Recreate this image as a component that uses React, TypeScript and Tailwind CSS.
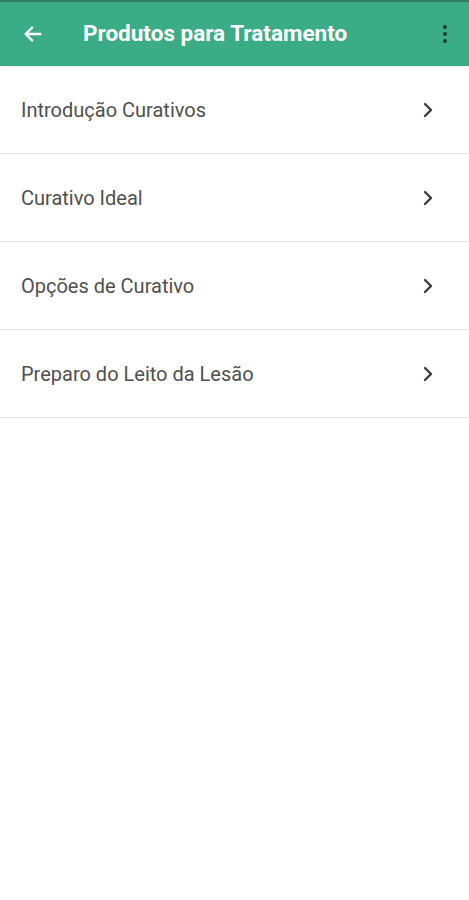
const items = [
    "Introdução Curativos",
    "Curativo Ideal",
    "Opções de Curativo",
    "Preparo do Leito da Lesão",
];

function ArrowLeft() {
    return (
        <svg width="22" height="22" viewBox="0 0 24 24" fill="none" stroke="white" strokeWidth="2.6" strokeLinecap="round" strokeLinejoin="round">
            <path d="M20 12H5" />
            <path d="M11 5l-7 7 7 7" />
        </svg>
    );
}

function Chevron() {
    return (
        <svg width="16" height="18" viewBox="0 0 16 18" fill="none" stroke="#3d3d3d" strokeWidth="2.4" strokeLinecap="round" strokeLinejoin="round">
            <path d="M5 3l6 6-6 6" />
        </svg>
    );
}

export default function App() {
    return (
        <div className="w-[469px] h-[900px] bg-white font-['Roboto',sans-serif]">
            <div className="h-[2px] bg-[#2e7f62]"></div>
            <div className="h-[64px] bg-[#3aac86] flex items-center pl-[22px] pr-[22px] shadow-[0_1px_2px_rgba(0,0,0,0.08)]">
                <ArrowLeft />
                <div className="ml-[39px] flex-1 text-white text-[22.5px] font-bold">Produtos para Tratamento</div>
                <div className="flex flex-col items-center gap-[2.5px]">
                    <span className="w-[4.5px] h-[4.5px] rounded-full bg-[#1d3b30]"></span>
                    <span className="w-[4.5px] h-[4.5px] rounded-full bg-[#1d3b30]"></span>
                    <span className="w-[4.5px] h-[4.5px] rounded-full bg-[#1d3b30]"></span>
                </div>
            </div>
            <div className="flex flex-col">
                {items.map((item) => (
                    <div key={item} className="h-[88px] flex items-center justify-between pl-[21px] pr-[33px] border-b-[1.5px] border-[#e4e4e4]">
                        <span className="text-[20px] text-[#505050]">{item}</span>
                        <Chevron />
                    </div>
                ))}
            </div>
        </div>
    );
}
